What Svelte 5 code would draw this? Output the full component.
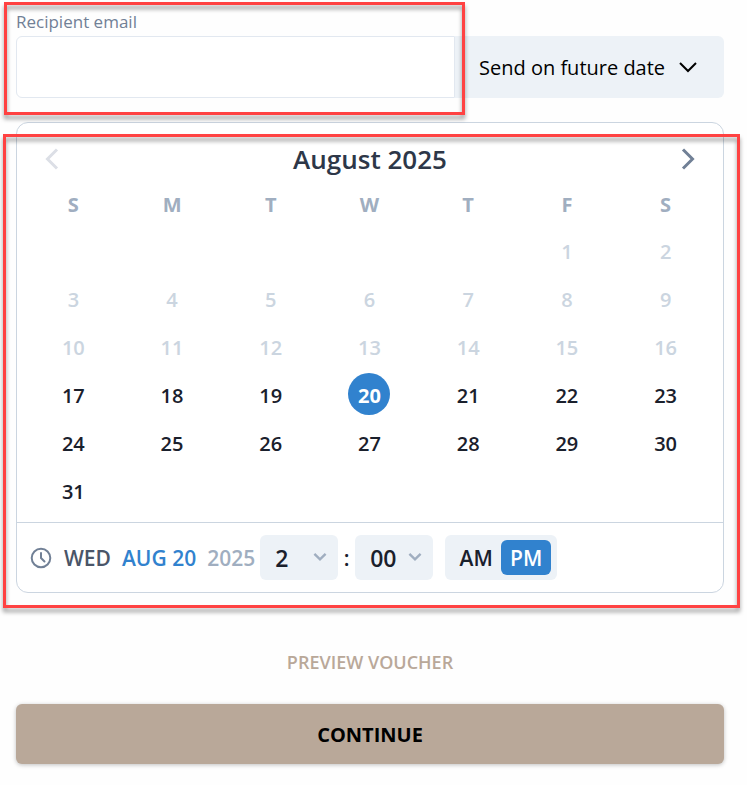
<script>
    const weekdays = ["S", "M", "T", "W", "T", "F", "S"];
    const dayNames = ["SUN", "MON", "TUE", "WED", "THU", "FRI", "SAT"];
    const months = [
        "January",
        "February",
        "March",
        "April",
        "May",
        "June",
        "July",
        "August",
        "September",
        "October",
        "November",
        "December",
    ];

    // Vouchers can't be sent before this date
    const firstDate = new Date(2025, 7, 17);

    let email = "";
    let sendWhen = "future";
    let year = 2025;
    let month = 7;
    let selected = new Date(2025, 7, 20);
    let hour = "2";
    let minute = "00";
    let period = "PM";

    // Weeks as rows of 7, null for the empty cells
    const getWeeks = (year, month) => {
        const offset = new Date(year, month, 1).getDay();
        const count = new Date(year, month + 1, 0).getDate();
        const cells = new Array(offset).fill(null);
        for (let day = 1; day <= count; day++) {
            cells.push(new Date(year, month, day));
        }
        while (cells.length % 7 !== 0) cells.push(null);

        const rows = [];
        for (let i = 0; i < cells.length; i += 7) {
            rows.push(cells.slice(i, i + 7));
        }
        return rows;
    };

    const moveMonth = (step) => {
        const next = new Date(year, month + step, 1);
        year = next.getFullYear();
        month = next.getMonth();
    };

    $: weeks = getWeeks(year, month);
    $: atStart = new Date(year, month, 1) <= firstDate;
</script>

<main>
    <div class="recipient">
        <label for="email">Recipient email</label>
        <div class="fields">
            <div class="email">
                <input id="email" type="email" bind:value={email} />
                <div class="highlight"></div>
            </div>
            <div class="select when">
                <select aria-label="When to send" bind:value={sendWhen}>
                    <option value="now">Send now</option>
                    <option value="future">Send on future date</option>
                </select>
                <svg viewBox="0 0 20 20" width="20" height="20">
                    <path d="M2 6l8 8 8-8" />
                </svg>
            </div>
        </div>
    </div>

    <section class="calendar">
        <header>
            <button
                class="arrow"
                aria-label="Previous month"
                disabled={atStart}
                on:click={() => moveMonth(-1)}
            >
                <svg viewBox="0 0 24 24" width="24" height="24">
                    <path d="M17 2.500L7.500 12l9.500 9.500" />
                </svg>
            </button>
            <h2>{months[month]} {year}</h2>
            <button
                class="arrow"
                aria-label="Next month"
                on:click={() => moveMonth(1)}
            >
                <svg viewBox="0 0 24 24" width="24" height="24">
                    <path d="M7 2.500L16.500 12l-9.500 9.500" />
                </svg>
            </button>
        </header>

        <table>
            <thead>
                <tr>
                    {#each weekdays as weekday}
                        <th>{weekday}</th>
                    {/each}
                </tr>
            </thead>
            <tbody>
                {#each weeks as week}
                    <tr>
                        {#each week as date}
                            <td>
                                {#if date}
                                    <button
                                        class="day"
                                        class:selected={date.getTime() ===
                                            selected.getTime()}
                                        disabled={date < firstDate}
                                        on:click={() => (selected = date)}
                                    >
                                        {date.getDate()}
                                    </button>
                                {/if}
                            </td>
                        {/each}
                    </tr>
                {/each}
            </tbody>
        </table>

        <footer>
            <svg class="clock" viewBox="0 0 22 22" width="22" height="22">
                <circle cx="11" cy="11" r="9.300" />
                <path d="M11 6v5l3.500 3.500" />
            </svg>
            <div class="summary">
                <span class="weekday">{dayNames[selected.getDay()]}</span>
                <span class="date">
                    {months[selected.getMonth()].slice(0, 3).toUpperCase()}
                    {selected.getDate()}
                </span>
                <span class="year">{selected.getFullYear()}</span>
            </div>
            <div class="time">
                <div class="select">
                    <select aria-label="Hour" bind:value={hour}>
                        {#each Array(12) as _, i}
                            <option value={String(i + 1)}>{i + 1}</option>
                        {/each}
                    </select>
                    <svg viewBox="0 0 20 20" width="16" height="16">
                        <path d="M3 6l7 7 7-7" />
                    </svg>
                </div>
                <span class="colon">:</span>
                <div class="select">
                    <select aria-label="Minute" bind:value={minute}>
                        {#each ["00", "15", "30", "45"] as option}
                            <option value={option}>{option}</option>
                        {/each}
                    </select>
                    <svg viewBox="0 0 20 20" width="16" height="16">
                        <path d="M3 6l7 7 7-7" />
                    </svg>
                </div>
            </div>
            <div class="period">
                {#each ["AM", "PM"] as option}
                    <button
                        class:active={period === option}
                        on:click={() => (period = option)}>{option}</button
                    >
                {/each}
            </div>
        </footer>
        <div class="highlight"></div>
    </section>

    <button class="preview">PREVIEW VOUCHER</button>
    <button class="continue">CONTINUE</button>
</main>

<style>
    :global(body) {
        margin: 0;
        background: #fefefe;
    }

    main {
        display: flex;
        flex-direction: column;
        padding: 8px 23px 20px 16px;
        font-family: "Segoe UI", "Open Sans", sans-serif;
        font-size: 20px;
        color: #1a202c;
    }

    button,
    input,
    select {
        box-sizing: border-box;
        margin: 0;
        font: inherit;
        color: inherit;
    }

    button {
        padding: 0;
        border: 0;
        background: none;
        cursor: pointer;
    }

    svg {
        display: block;
        fill: none;
        stroke: currentColor;
        stroke-width: 2;
        stroke-linecap: round;
        stroke-linejoin: round;
    }

    label {
        display: block;
        font-size: 17px;
        line-height: 28px;
        color: #718096;
    }

    .fields {
        display: flex;
    }

    .email {
        position: relative;
        flex: 1;
    }

    .email input {
        display: block;
        width: 100%;
        height: 62px;
        padding: 0 20px;
        border: 1px solid #e2e8f0;
        border-radius: 6px 0 0 6px;
        background: #fff;
    }

    /* red marker frames around the two areas */
    .highlight {
        position: absolute;
        z-index: 1;
        border: 3px solid #ff4242;
        filter: drop-shadow(0 4px 2px rgba(0, 0, 0, 0.4));
        pointer-events: none;
    }

    .email .highlight {
        inset: -34px -10px -17px -12px;
    }

    .calendar .highlight {
        inset: 11px -17px -16px -14px;
    }

    .select {
        position: relative;
    }

    .select select {
        display: block;
        width: 100%;
        height: 45px;
        padding: 0 15px;
        border: 0;
        border-radius: 6px;
        background: #edf2f7;
        appearance: none;
    }

    .select svg {
        position: absolute;
        top: 14px;
        right: 10px;
        color: #a0aec0;
        stroke-width: 3;
        stroke-linecap: butt;
        stroke-linejoin: miter;
        pointer-events: none;
    }

    .when {
        width: 269px;
    }

    .when select {
        height: 62px;
        padding: 1px 24px 0;
        border-radius: 0 6px 6px 0;
        color: #000;
    }

    .when svg {
        top: 21px;
        right: 26px;
        color: #000;
        stroke-width: 2;
    }

    .calendar {
        position: relative;
        margin-top: 24px;
        border: 1px solid #cbd5e0;
        border-radius: 12px;
        background: #fff;
    }

    header {
        display: flex;
        align-items: center;
        justify-content: space-between;
        height: 40px;
        padding: 16px 23px 0;
    }

    h2 {
        margin: 0;
        font-size: 26px;
        font-weight: 600;
        color: #2d3748;
    }

    .arrow {
        color: #718096;
    }

    .arrow svg {
        stroke-width: 3;
        stroke-linecap: butt;
        stroke-linejoin: miter;
    }

    .arrow:disabled {
        color: #dcdfe6;
    }

    table {
        width: 100%;
        padding: 0 8px 8px 7px;
        border-spacing: 0;
        table-layout: fixed;
    }

    th {
        height: 44px;
        padding: 3px 0 0;
        font-weight: 700;
        color: #a0aec0;
    }

    td {
        height: 48px;
        padding: 0;
        text-align: center;
    }

    .day {
        width: 42px;
        height: 42px;
        padding-top: 2px;
        border-radius: 50%;
        font-weight: 600;
    }

    .day:disabled {
        color: #cbd5e0;
        cursor: default;
    }

    .day.selected {
        background: #3182ce;
        font-weight: 700;
        color: #fff;
    }

    footer {
        display: flex;
        align-items: center;
        padding: 12px 13px;
        border-top: 1px solid #cbd5e0;
        font-size: 21px;
        font-weight: 600;
    }

    .clock {
        margin-right: 12px;
        color: #718096;
    }

    .summary {
        display: flex;
        gap: 11px;
        margin-right: 5px;
    }

    .weekday {
        color: #4a5568;
    }

    .date {
        color: #3182ce;
    }

    .year {
        color: #a0aec0;
    }

    .time {
        display: flex;
        align-items: center;
        margin-right: 12px;
    }

    .time .select {
        width: 78px;
    }

    .time select {
        font-size: 23px;
    }

    .colon {
        width: 17px;
        text-align: center;
    }

    .period {
        display: flex;
        padding: 5px 6px;
        border-radius: 6px;
        background: #edf2f7;
    }

    .period button {
        width: 50px;
        height: 35px;
        border-radius: 6px;
    }

    .period .active {
        background: #3182ce;
        color: #fff;
    }

    .preview {
        align-self: center;
        margin-top: 53px;
        font-size: 18px;
        line-height: 32px;
        font-weight: 600;
        color: #b9a899;
    }

    .continue {
        height: 60px;
        margin-top: 26px;
        border-radius: 6px;
        background: #b9a899;
        box-shadow: 0 1px 4px rgba(0, 0, 0, 0.25);
        font-weight: 700;
        color: #000;
    }
</style>
